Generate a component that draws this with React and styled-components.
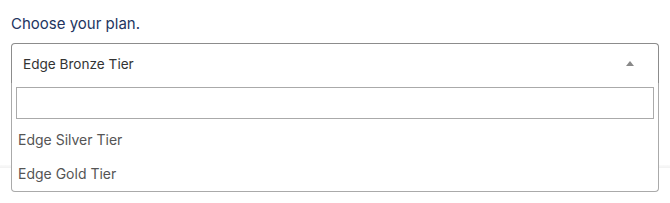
import styled, { createGlobalStyle } from "styled-components";

const GlobalStyle = createGlobalStyle`
  body {
    margin: 0;
    background: #fff;
    font-family: Inter, "Noto Sans", Arial, sans-serif;
  }
`;

const Page = styled.div`
  width: 670px;
  height: 203px;
  overflow: hidden;
`;

const Form = styled.div`
  padding: 15px 11px 0 11px;
`;

const Label = styled.label`
  display: block;
  font-size: 15px;
  line-height: 18px;
  color: #23355f;
  margin-bottom: 10px;
`;

const SelectWrap = styled.div`
  position: relative;
  width: 648px;
`;

const Selection = styled.div`
  display: flex;
  align-items: center;
  justify-content: space-between;
  height: 39px;
  padding: 0 24px 0 11px;
  border: 1px solid #8c8c8c;
  border-bottom-color: #7a7a7a;
  border-radius: 4px 4px 0 0;
  font-size: 13.6px;
  color: #333;
`;

const Arrow = styled.span`
  width: 0;
  height: 0;
  border-left: 4px solid transparent;
  border-right: 4px solid transparent;
  border-bottom: 5px solid #888;
`;

const Dropdown = styled.div`
  position: absolute;
  top: 40px;
  left: 0;
  right: 0;
  background: #fff;
  border: 1px solid #aaa;
  border-top: none;
  border-radius: 0 0 4px 4px;
  z-index: 2;
`;

const SearchBox = styled.div`
  padding: 4px;
`;

const Search = styled.input`
  display: block;
  box-sizing: border-box;
  width: 100%;
  height: 32px;
  border: 1px solid #aaa;
  border-radius: 0;
  outline: none;
  padding: 4px;
  font-size: 14px;
`;

const Options = styled.ul`
  list-style: none;
  margin: 0;
  padding: 0;
`;

const Option = styled.li`
  padding: 0 6px;
  height: 34px;
  line-height: 34px;
  font-size: 14px;
  color: #555;
`;

const Divider = styled.div`
  margin-top: 81px;
  height: 3px;
  background: linear-gradient(#fafafa, #f2f2f2);
`;

export default function App() {
  return (
    <Page>
      <GlobalStyle />
      <Form>
        <Label>Choose your plan.</Label>
        <SelectWrap>
          <Selection>
            <span>Edge Bronze Tier</span>
            <Arrow />
          </Selection>
          <Dropdown>
            <SearchBox>
              <Search type="text" />
            </SearchBox>
            <Options>
              <Option>Edge Silver Tier</Option>
              <Option>Edge Gold Tier</Option>
            </Options>
          </Dropdown>
        </SelectWrap>
      </Form>
      <Divider />
    </Page>
  );
}
